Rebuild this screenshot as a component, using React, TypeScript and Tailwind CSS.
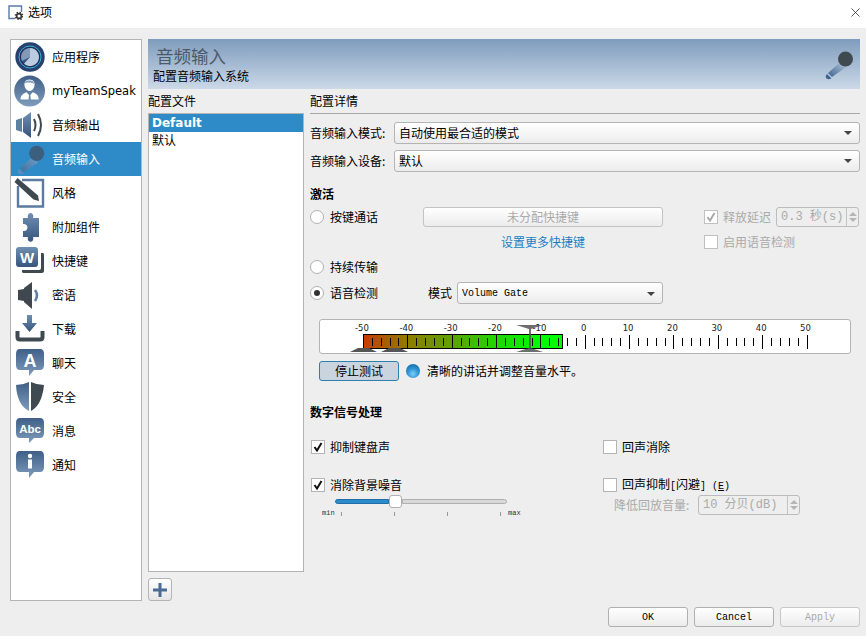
import React from 'react';
import { X } from 'lucide-react';

const MONO = "[font-family:'Liberation_Mono','Noto_Sans_CJK_SC',monospace]";

/* shared gradients for the sidebar drawings */
const Defs = () => (
  <svg className="h-0 w-0">
    <defs>
      <linearGradient id="blue" x1="0" y1="0" x2="0" y2="1">
        <stop offset="0" stopColor="#3f5f87" />
        <stop offset="1" stopColor="#7f9cbc" />
      </linearGradient>
      <linearGradient id="blueDown" x1="0" y1="0" x2="0" y2="1">
        <stop offset="0" stopColor="#6f8fb2" />
        <stop offset="1" stopColor="#37557c" />
      </linearGradient>
      <linearGradient id="micBody" x1="1" y1="0" x2="0" y2="1">
        <stop offset="0" stopColor="#b9cde2" />
        <stop offset="1" stopColor="#3f6390" />
      </linearGradient>
      <linearGradient id="micSel" x1="1" y1="0" x2="0" y2="1">
        <stop offset="0" stopColor="#6f9fc8" />
        <stop offset="1" stopColor="#3f6f9c" />
      </linearGradient>
      <radialGradient id="orb" cx="0.5" cy="0.7" r="0.7">
        <stop offset="0" stopColor="#7fd0f5" />
        <stop offset="0.55" stopColor="#2a94d6" />
        <stop offset="1" stopColor="#1a6ea8" />
      </radialGradient>
      <linearGradient id="level" x1="0" y1="0" x2="1" y2="0">
        <stop offset="0" stopColor="#c63c00" />
        <stop offset="0.22" stopColor="#8f7c00" />
        <stop offset="0.45" stopColor="#5da300" />
        <stop offset="0.67" stopColor="#1ed800" />
        <stop offset="0.9" stopColor="#00fb00" />
        <stop offset="1" stopColor="#00ff00" />
      </linearGradient>
    </defs>
  </svg>
);

const Ico = ({ children }: { children: React.ReactNode }) => (
  <svg width="32" height="32" viewBox="0 0 32 32" className="shrink-0">
    {children}
  </svg>
);

const icons: Record<string, React.ReactNode> = {
  app: (
    <Ico>
      <circle cx="16" cy="16" r="14.7" fill="#27406f" />
      <circle cx="16" cy="16" r="11" fill="#1d3158" stroke="#39b4d6" strokeWidth="1" />
      <circle cx="16" cy="16" r="9" fill="#35527f" />
      <path d="M16 7 A9 9 0 1 1 10 22.7 L16 16 Z" fill="#bccbe0" />
      <path d="M16 7 A9 9 0 0 0 8 20 L16 16 Z" fill="#8299b8" />
    </Ico>
  ),
  user: (
    <Ico>
      <circle cx="15.6" cy="16" r="15.4" fill="url(#blue)" />
      <path d="M15.5 4.5 C19.5 4.5 21 7.5 20.5 10.5 C20 13.5 18 16 15.5 16 C13 16 11 13.5 10.5 10.5 C10 7.5 11.5 4.5 15.5 4.5 Z" fill="#fff" />
      <path d="M11 8.5 C13 7 18 7 20 9 C20 6 18 5.5 15.5 5.5 C13 5.5 11 6 11 8.5 Z" fill="#7f9cbc" />
      <path d="M6.5 24.5 C6.5 20.5 9 18.5 12.5 17.2 L15 20 L14.5 24.5 Z M24.8 24.5 C24.8 20.5 22.5 18.5 18.7 17.2 L16.3 20 L16.8 24.5 Z" fill="#fff" />
    </Ico>
  ),
  speaker: (
    <Ico>
      <path d="M2 11 L8 9 L8 23 L2 21 Z" fill="#5f7fa3" />
      <path d="M9 9 L17 3 L17 29 L9 23 Z" fill="url(#blueDown)" />
      <path d="M20 10 Q23 16 20 22" fill="none" stroke="#40484f" strokeWidth="2" />
      <path d="M24 5 Q30 16 24 27" fill="none" stroke="#40484f" strokeWidth="2" />
    </Ico>
  ),
  mic: (
    <Ico>
      <path d="M18.5 14 L24 19.5 L10 29 L6 25 Z" fill="url(#micSel)" />
      <path d="M5 26 L9.5 30.5 Q5.5 32 4 30 Q3 28 5 26 Z" fill="#5f8fb8" />
      <circle cx="22.7" cy="10.3" r="7.6" fill="#3c5f80" />
    </Ico>
  ),
  style: (
    <Ico>
      <path d="M8 3 H29 V29.5 H4 V9" fill="#fff" stroke="#5b7ba0" strokeWidth="2.4" />
      <path d="M3.5 1 L24 18.5 L25 24 L19.5 22.5 L0.5 5 Z" fill="#3f4950" />
    </Ico>
  ),
  addon: (
    <Ico>
      <path
        fillRule="evenodd"
        d="M9 7 H14 Q13 5 14.5 3 Q16.5 1 18.5 3 Q20 5 19 7 H25 V26 H19 Q20 28 18.5 30 Q16.5 31.5 14.5 30 Q13 28 14 26 H9 V20 Q13 20.5 13.5 16.5 Q13 12.5 9 13 Z"
        fill="url(#blueDown)"
      />
    </Ico>
  ),
  key: (
    <Ico>
      <path d="M27 8 H29 Q30 8 30 10 V26 Q30 28 28 28 H10 Q8 28 8 27 V25 H25 Q27 25 27 23 Z" fill="#3f4950" />
      <rect x="2" y="2" width="22" height="20" rx="3" fill="url(#blueDown)" />
      <text x="13" y="18" textAnchor="middle" fontSize="15" fontWeight="700" fill="#fff" fontFamily="Liberation Sans">W</text>
    </Ico>
  ),
  whisper: (
    <Ico>
      <path d="M4 11 L10 10 L10 22 L4 21 Z" fill="#40484f" />
      <path d="M10 9 L18 3 L18 30 L10 23 Z" fill="#40484f" />
      <path d="M21 11 Q25 16 21 22" fill="none" stroke="#5f7fa3" strokeWidth="2.6" />
    </Ico>
  ),
  download: (
    <Ico>
      <path d="M13 2 H18 V10 H23 L15.5 19 L8 10 H13 Z" fill="url(#blueDown)" />
      <path d="M3.5 18 V24 Q3.5 26.5 6 26.5 H26 Q28.5 26.5 28.5 24 V18" fill="none" stroke="#3f4950" strokeWidth="4" />
    </Ico>
  ),
  chat: (
    <Ico>
      <path d="M6 2 H26 Q30 2 30 7 V18 Q30 23 26 23 H20 L15 29 L15 23 H6 Q2 23 2 18 V7 Q2 2 6 2 Z" fill="url(#blue)" />
      <text x="16" y="20" textAnchor="middle" fontSize="18" fontWeight="700" fill="#fff" fontFamily="Liberation Sans">A</text>
    </Ico>
  ),
  shield: (
    <Ico>
      <path d="M15 1 L15 30 Q3 24 2 4 Q9 4 15 1 Z" fill="url(#blue)" />
      <path d="M17 1 L17 30 Q28 24 30 4 Q23 4 17 1 Z" fill="#3f4950" />
    </Ico>
  ),
  message: (
    <Ico>
      <path d="M6 3 H26 Q30 3 30 8 V18 Q30 23 26 23 H20 L15 28 L15 23 H6 Q2 23 2 18 V8 Q2 3 6 3 Z" fill="url(#blue)" />
      <text x="16" y="17.5" textAnchor="middle" fontSize="11.5" fontWeight="700" fill="#fff" fontFamily="Liberation Sans">Abc</text>
    </Ico>
  ),
  info: (
    <Ico>
      <path d="M6 2 H26 Q30 2 30 7 V18 Q30 23 26 23 H20 L15 29 L15 23 H6 Q2 23 2 18 V7 Q2 2 6 2 Z" fill="url(#blue)" />
      <circle cx="16" cy="7" r="2.2" fill="#fff" />
      <rect x="14" y="10.5" width="4" height="9" fill="#fff" />
    </Ico>
  ),
};

const navItems = [
  ['app', '应用程序'],
  ['user', 'myTeamSpeak'],
  ['speaker', '音频输出'],
  ['mic', '音频输入'],
  ['style', '风格'],
  ['addon', '附加组件'],
  ['key', '快捷键'],
  ['whisper', '密语'],
  ['download', '下载'],
  ['chat', '聊天'],
  ['shield', '安全'],
  ['message', '消息'],
  ['info', '通知'],
];

const Combo = ({ children, className }: { children: React.ReactNode; className: string }) => (
  <div className={`flex items-center justify-between rounded-[3px] border border-[#b4b4b4] bg-gradient-to-b from-white to-[#ececec] pl-[4px] pr-[7px] text-black ${className}`}>
    <span>{children}</span>
    <span className="h-0 w-0 border-x-[4px] border-t-[4px] border-x-transparent border-t-[#444]" />
  </div>
);

const Radio = ({ on, label }: { on?: boolean; label: string }) => (
  <div className="flex w-[100px] items-center gap-[6px]">
    <span className="flex h-[14px] w-[14px] items-center justify-center rounded-full border border-[#b0b0b0] bg-white">
      {on && <span className="h-[6px] w-[6px] rounded-full bg-[#333]" />}
    </span>
    <span>{label}</span>
  </div>
);

const Check = ({ on, disabled }: { on?: boolean; disabled?: boolean }) => (
  <span className={`flex h-[14px] w-[14px] shrink-0 items-center justify-center border bg-white ${disabled ? 'border-[#c0c0c0]' : 'border-[#b4b4b4]'}`}>
    {on && (
      <svg width="10" height="10" viewBox="0 0 10 10">
        <path d="M1.5 5 L4 8.5 L8.5 1" fill="none" stroke={disabled ? '#a8a8a8' : '#111'} strokeWidth="2" />
      </svg>
    )}
  </span>
);

const Spin = ({ text, className, split }: { text: string; className: string; split: string }) => (
  <div className={`flex items-stretch rounded-[3px] border border-[#bcbcbc] text-[#aaaaaa] ${MONO} ${className}`}>
    <span className={`flex items-center pl-[4px] ${split}`}>{text}</span>
    <span className="flex flex-1 flex-col items-center justify-center gap-[2px] border-l border-[#c4c4c4]">
      <span className="h-0 w-0 border-x-[4px] border-b-[4px] border-x-transparent border-b-[#b5b5b5]" />
      <span className="h-0 w-0 border-x-[4px] border-t-[4px] border-x-transparent border-t-[#b5b5b5]" />
    </span>
  </div>
);

const FooterButton = ({ label, disabled }: { label: string; disabled?: boolean }) => (
  <div className={`flex h-[20px] w-[80px] items-center justify-center rounded-[3px] border bg-gradient-to-b from-white to-[#ececec] pt-[1px] text-[10px] ${MONO} ${disabled ? 'border-[#c8c8c8] text-[#aaaaaa]' : 'border-[#b0b0b0] text-black'}`}>
    {label}
  </div>
);

const Meter = () => {
  const marks = Array.from({ length: 51 }, (_, i) => i);
  const xAt = (i: number) => 363 + i * 8.87;
  return (
    <div className="ml-[9px] h-[35px] w-[532px] rounded-[3px] border border-[#b4b4b4] bg-white">
      <svg width="530" height="33" viewBox="320 320 530 33">
        <rect x="363.5" y="334.5" width="199" height="14" fill="url(#level)" stroke="#000" />
        {marks.map((i) => {
          const major = i % 5 === 0 ? 1 : 0;
          if (major) {
            return <rect key={i} x={Math.round(xAt(i))} y="335" width="1" height="14" fill="#000" />;
          }
          return <rect key={i} x={Math.round(xAt(i))} y="338" width="1" height="8" fill="#000" />;
        })}
        {[-50, -40, -30, -20, -10, 0, 10, 20, 30, 40, 50].map((v, i) => (
          <text key={v} x={362 + i * 44.35} y="330.5" textAnchor="middle" fontSize="8.5" fill="#222" fontFamily="DejaVu Sans">
            {v}
          </text>
        ))}
        <path d="M516 325 H543 L531 329 V348 L543 352 H516 L529 348 V329 Z" fill="#555" opacity="0.85" />
        <path d="M350 352 L358 348 H369 L377 352 Z M381 352 L389 348 H400 L408 352 Z" fill="#555" />
      </svg>
    </div>
  );
};

const Slider = () => (
  <div className="ml-[12px] mt-[2px] w-[200px]">
    <div className="ml-[13px] flex h-[13px] w-[172px] items-center">
      <div className="h-[5px] w-[54px] rounded-l-full border border-[#1f6ea6] bg-[#2e8bcb]" />
      <div className="h-[13px] w-[13px] shrink-0 rounded-[3px] border border-[#b0b0b0] bg-white" />
      <div className="h-[5px] flex-1 rounded-r-full border border-[#b0b0b0] bg-[#d8d8d8]" />
    </div>
    <div className={`mt-[1px] flex items-center text-[7px] leading-[9px] text-[#333] ${MONO}`}>
      <span className="w-[19px]">min</span>
      <span className="h-[4px] w-[1px] bg-[#999]" />
      <span className="ml-[52px] h-[4px] w-[1px] bg-[#999]" />
      <span className="ml-[52px] h-[4px] w-[1px] bg-[#999]" />
      <span className="ml-[52px] h-[4px] w-[1px] bg-[#999]" />
      <span className="ml-[7px]">max</span>
    </div>
  </div>
);

export default function App() {
  return (
    <div className="flex h-[636px] w-[866px] flex-col overflow-hidden bg-[#eeeeee] text-[12px] leading-[16px] text-black [font-family:'Noto_Sans_CJK_SC',sans-serif]">
      <Defs />
      {/* title bar */}
      <div className="flex h-[28px] items-center bg-white pb-[4px] pl-[8px] pr-[3px]">
        <svg width="15" height="15" viewBox="0 0 15 15">
          <path d="M7 13.5 H1 V1 H13.5 V7" fill="none" stroke="#5b7ba0" strokeWidth="1.4" />
          <circle cx="11" cy="11" r="2.4" fill="none" stroke="#333" strokeWidth="1.6" />
          <circle cx="11" cy="11" r="3.8" fill="none" stroke="#333" strokeWidth="1.2" strokeDasharray="1.4 1.6" />
        </svg>
        <span className="ml-[5px]">选项</span>
        <X className="ml-auto h-[15px] w-[15px] text-[#222]" strokeWidth={1.2} />
      </div>

      <div className="flex gap-[6px] pl-[10px] pt-[11px]">
        {/* sidebar */}
        <div className="h-[562px] w-[132px] border border-[#b4b4b4] bg-white">
          {navItems.map(([key, label]) => (
            <div
              key={key}
              className={`flex h-[34px] items-center gap-[6px] pl-[3px] ${key === 'mic' ? 'bg-[#2e8bc8] text-white' : ''}`}
            >
              {icons[key]}
              <span className={key === 'user' ? "whitespace-nowrap text-[11.5px] [font-family:'DejaVu_Sans',sans-serif]" : ''}>{label}</span>
            </div>
          ))}
        </div>

        <div className="flex h-[562px] w-[712px] flex-col">
          {/* page header */}
          <div className="flex h-[50px] items-center justify-between bg-gradient-to-b from-[#7f9cbd] to-[#ccd9e8] pl-[5px] pr-[6px]">
            <div>
              <div className="pl-[3px] text-[17.5px] leading-[24px] text-[#4d5a69]">音频输入</div>
              <div className="leading-[16px]">配置音频输入系统</div>
            </div>
            <svg width="32" height="32" viewBox="0 0 32 32">
              <path d="M19.5 13 L25 18.5 L10 29 L6 25 Z" fill="url(#micBody)" />
              <path d="M5 26 L9.5 30.5 Q5.5 32 4 30 Q3 28 5 26 Z" fill="#3f6390" />
              <circle cx="23.5" cy="11" r="7.5" fill="#3f4950" />
            </svg>
          </div>

          <div className="flex flex-1 gap-[6px]">
            {/* profiles */}
            <div className="flex w-[156px] flex-col">
              <div className="flex h-[24px] items-center">配置文件</div>
              <div className="h-[459px] border border-[#b4b4b4] bg-white">
                <div className="flex h-[18px] items-center bg-[#2e8bc8] pl-[3px] text-[12px] font-bold text-white [font-family:'DejaVu_Sans',sans-serif]">
                  Default
                </div>
                <div className="flex h-[16px] items-center pl-[3px]">默认</div>
              </div>
              <div className="mt-[6px] flex h-[23px] w-[24px] items-center justify-center rounded-[3px] border border-[#b4b4b4] bg-gradient-to-b from-white to-[#e6e6e6]">
                <svg width="14" height="14" viewBox="0 0 14 14">
                  <path d="M0 7 H14 M7 0 V14" stroke="#4a6b94" strokeWidth="3" />
                </svg>
              </div>
            </div>

            {/* details */}
            <div className="w-[550px]">
              <div className="flex h-[25px] items-center border-b border-[#a8a8a8]">配置详情</div>
              <div className="mt-[8px] flex h-[22px] items-center">
                <span className="w-[84px]">音频输入模式:</span>
                <Combo className="h-[22px] flex-1">自动使用最合适的模式</Combo>
              </div>
              <div className="mt-[6px] flex h-[22px] items-center">
                <span className="w-[84px]">音频输入设备:</span>
                <Combo className="h-[22px] flex-1">默认</Combo>
              </div>

              <div className="mt-[14px] font-bold">激活</div>

              <div className="mt-[5px] flex h-[20px] items-center">
                <Radio label="按键通话" />
                <div className="ml-[13px] flex h-[20px] w-[240px] items-center justify-center rounded-[3px] border border-[#c4c4c4] bg-gradient-to-b from-white to-[#ececec] text-[#aaaaaa]">
                  未分配快捷键
                </div>
                <div className="ml-[41px] flex items-center gap-[5px] text-[#aaaaaa]">
                  <Check on disabled />
                  <span>释放延迟</span>
                </div>
                <Spin text="0.3 秒(s)" className="ml-[5px] h-[20px] w-[83px]" split="w-[69px]" />
              </div>

              <div className="mt-[7px] flex h-[16px] items-center">
                <a className="ml-[113px] w-[240px] text-center text-[#1a7fc4]">设置更多快捷键</a>
                <div className="ml-[41px] flex items-center gap-[5px] text-[#aaaaaa]">
                  <Check disabled />
                  <span>启用语音检测</span>
                </div>
              </div>

              <div className="mt-[9px] flex h-[16px] items-center">
                <Radio label="持续传输" />
              </div>

              <div className="mt-[7px] flex h-[22px] items-center">
                <Radio on label="语音检测" />
                <span className="ml-[18px] w-[29px]">模式</span>
                <Combo className={`h-[22px] w-[206px] pt-[2px] text-[10px] ${MONO}`}>Volume Gate</Combo>
              </div>

              <div className="mt-[15px]">
                <Meter />
              </div>

              <div className="ml-[9px] mt-[7px] flex h-[20px] items-center">
                <div className="flex h-[20px] w-[80px] items-center justify-center rounded-[3px] border border-[#2f7fb0] bg-[#c9d4df]">
                  停止测试
                </div>
                <svg width="14" height="14" viewBox="0 0 14 14" className="ml-[7px]">
                  <circle cx="7" cy="7" r="7" fill="url(#orb)" />
                </svg>
                <span className="ml-[7px]">清晰的讲话并调整音量水平。</span>
              </div>

              <div className="mt-[23px] font-bold">数字信号处理</div>

              <div className="mt-[19px] grid grid-cols-[293px_1fr]">
                <div className="flex h-[16px] items-center gap-[5px] pl-[1px]">
                  <Check on />
                  <span>抑制键盘声</span>
                </div>
                <div className="flex h-[16px] items-center gap-[5px]">
                  <Check />
                  <span>回声消除</span>
                </div>
                <div className="mt-[22px]">
                  <div className="flex h-[16px] items-center gap-[5px] pl-[1px]">
                    <Check on />
                    <span>消除背景噪音</span>
                  </div>
                  <Slider />
                </div>
                <div className="mt-[22px]">
                  <div className="flex h-[16px] items-center gap-[5px]">
                    <Check />
                    <span>
                      回声抑制<span className={`text-[10px] ${MONO}`}>[</span>闪避<span className={`text-[10px] ${MONO}`}>] (<span className="underline">E</span>)</span>
                    </span>
                  </div>
                  <div className="mt-[2px] flex h-[20px] items-center pl-[11px] text-[#aaaaaa]">
                    <span className="w-[84px]">降低回放音量:</span>
                    <Spin text="10 分贝(dB)" className="h-[20px] w-[102px]" split="w-[88px]" />
                  </div>
                </div>
              </div>
            </div>
          </div>
        </div>
      </div>

      <div className="mt-[6px] flex justify-end gap-[6px] pr-[6px]">
        <FooterButton label="OK" />
        <FooterButton label="Cancel" />
        <FooterButton label="Apply" disabled />
      </div>
    </div>
  );
}
